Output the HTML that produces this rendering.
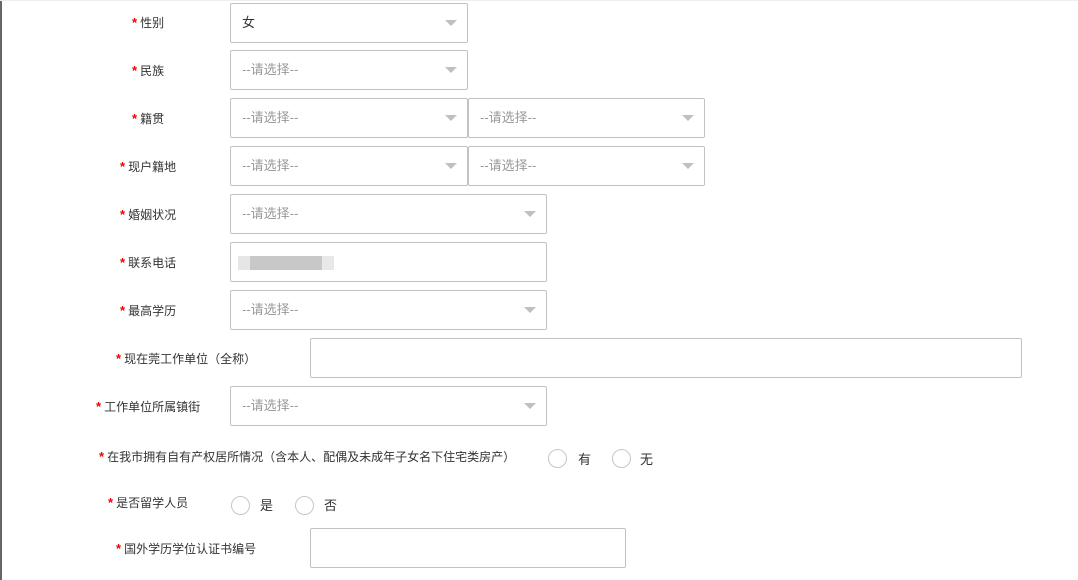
<!DOCTYPE html>
<html><head><meta charset="utf-8"><style>
*{margin:0;padding:0;box-sizing:border-box}
body{width:1078px;height:580px;background:#fff;position:relative;overflow:hidden;font-family:"Liberation Sans","Noto Sans CJK SC",sans-serif;color:#333}
.lb{position:absolute;font-size:12px;line-height:16px;white-space:nowrap}
.lb b{color:#e00;font-weight:bold;margin-right:3px;font-size:13px}
.bx{position:absolute;border:1px solid #c2c2c2;border-radius:2px;background:#fff;font-size:13px;color:#999;line-height:37px;padding-left:11px}
.sel:after{content:"";position:absolute;right:10px;top:16px;border-left:6px solid transparent;border-right:6px solid transparent;border-top:6px solid #c0c0c0}
.r{position:absolute;width:19px;height:19px;border:1px solid #c6c6c6;border-radius:50%}
.rt{position:absolute;font-size:13px;line-height:16px}
</style></head><body>
<div style="position:absolute;left:0;top:0;width:2px;height:580px;background:#666"></div>
<div style="position:absolute;left:0;top:0;width:1078px;height:1px;background:#eee"></div>

<div class="lb" style="left:132px;top:15px"><b>*</b>性别</div>
<div class="bx sel" style="left:230px;top:3px;width:238px;height:40px;color:#333">女</div>

<div class="lb" style="left:132px;top:63px"><b>*</b>民族</div>
<div class="bx sel" style="left:230px;top:50px;width:238px;height:40px">--请选择--</div>

<div class="lb" style="left:132px;top:111px"><b>*</b>籍贯</div>
<div class="bx sel" style="left:230px;top:98px;width:238px;height:40px">--请选择--</div>
<div class="bx sel" style="left:468px;top:98px;width:237px;height:40px">--请选择--</div>

<div class="lb" style="left:120px;top:159px"><b>*</b>现户籍地</div>
<div class="bx sel" style="left:230px;top:146px;width:238px;height:40px">--请选择--</div>
<div class="bx sel" style="left:468px;top:146px;width:237px;height:40px">--请选择--</div>

<div class="lb" style="left:120px;top:207px"><b>*</b>婚姻状况</div>
<div class="bx sel" style="left:230px;top:194px;width:317px;height:40px">--请选择--</div>

<div class="lb" style="left:120px;top:255px"><b>*</b>联系电话</div>
<div class="bx" style="left:230px;top:242px;width:317px;height:40px"></div>
<div style="position:absolute;left:238px;top:256px;width:12px;height:14px;background:#e6e6e6"></div>
<div style="position:absolute;left:250px;top:256px;width:72px;height:14px;background:#c8c8c8"></div>
<div style="position:absolute;left:322px;top:256px;width:12px;height:14px;background:#e8e8e8"></div>

<div class="lb" style="left:120px;top:303px"><b>*</b>最高学历</div>
<div class="bx sel" style="left:230px;top:290px;width:317px;height:40px">--请选择--</div>

<div class="lb" style="left:116px;top:351px"><b>*</b>现在莞工作单位（全称）</div>
<div class="bx" style="left:310px;top:338px;width:712px;height:40px"></div>

<div class="lb" style="left:96px;top:399px"><b>*</b>工作单位所属镇街</div>
<div class="bx sel" style="left:230px;top:386px;width:317px;height:40px">--请选择--</div>

<div class="lb" style="left:99px;top:449px"><b>*</b>在我市拥有自有产权居所情况（含本人、配偶及未成年子女名下住宅类房产）</div>
<div class="r" style="left:548px;top:449px"></div><div class="rt" style="left:578px;top:452px">有</div>
<div class="r" style="left:612px;top:449px"></div><div class="rt" style="left:640px;top:452px">无</div>

<div class="lb" style="left:108px;top:495px"><b>*</b>是否留学人员</div>
<div class="r" style="left:231px;top:496px"></div><div class="rt" style="left:260px;top:498px">是</div>
<div class="r" style="left:295px;top:496px"></div><div class="rt" style="left:324px;top:498px">否</div>

<div class="lb" style="left:116px;top:541px"><b>*</b>国外学历学位认证书编号</div>
<div class="bx" style="left:310px;top:528px;width:316px;height:40px"></div>
</body></html>
